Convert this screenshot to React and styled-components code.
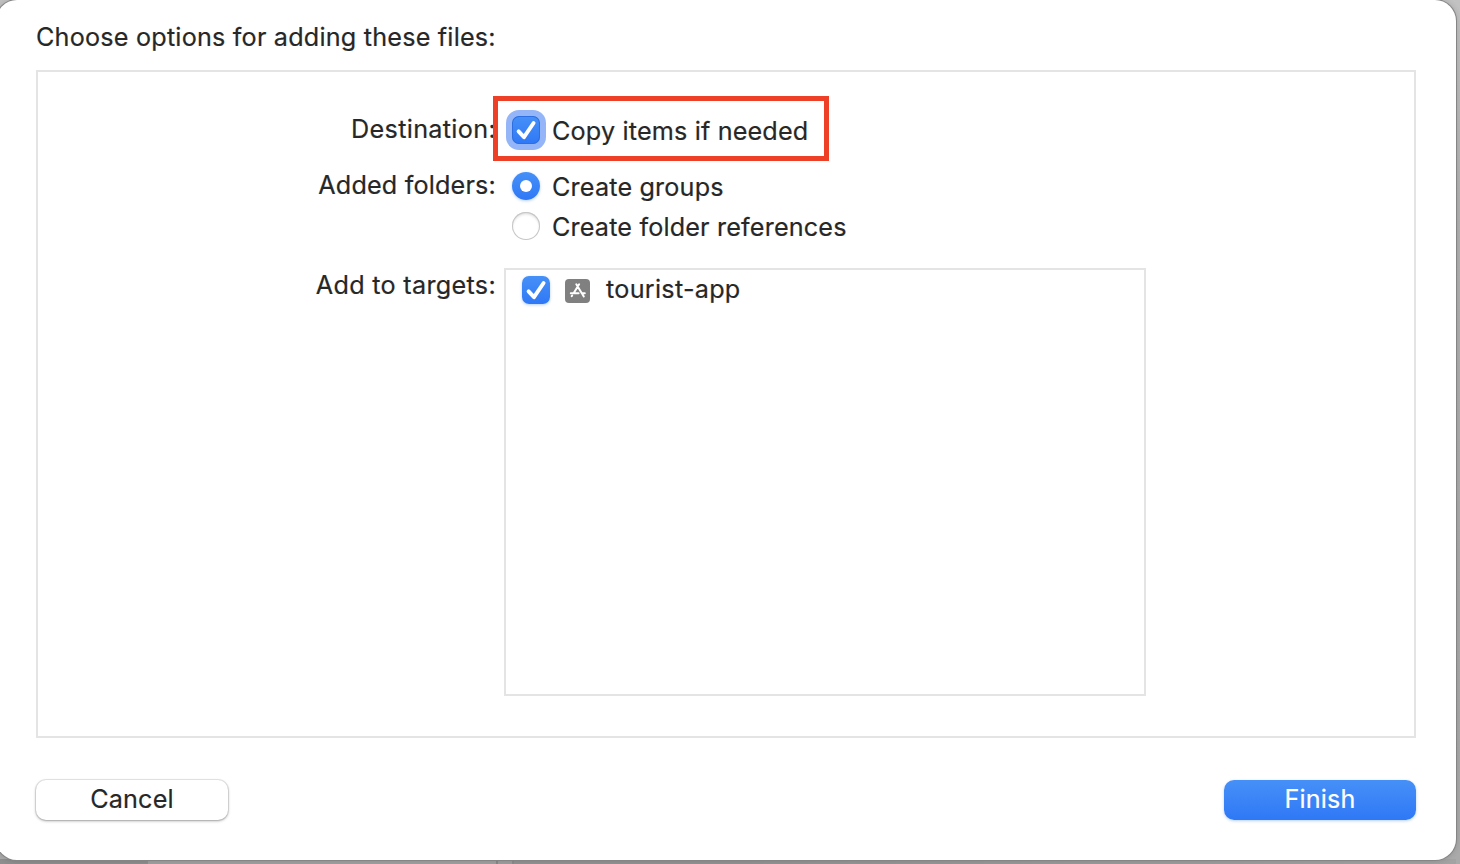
import React from 'react';
import styled, { createGlobalStyle, css } from 'styled-components';

const GlobalStyle = createGlobalStyle`
  * { box-sizing: border-box; }
  body { margin: 0; overflow: hidden; }
`;

const Backdrop = styled.div`
  width: 1460px;
  height: 864px;
  padding: 0 4px 4px 0;
  overflow: hidden;
  background:
    linear-gradient(90deg, #8e8e8e 148px, #a0a0a0 148px 496px, #888 496px 498px, #9e9e9e 498px 512px, #8c8c8c 512px 514px, #939393 514px 740px, #a3a3a3 1456px, transparent 1456px) 0 100% / 100% 5px no-repeat,
    linear-gradient(#c2c2c2, #b2b2b2 200px, #a9a9a9 600px, #aaa);
`;

const Sheet = styled.main`
  display: flex;
  flex-direction: column;
  width: 1460px;
  height: 860px;
  margin-left: -4px;
  padding: 18px 40px 0;
  border-radius: 21px;
  background: #fff;
  box-shadow: 0 0 0 1px #858585, 0 0 6px rgba(0, 0, 0, 0.2);
  color: #272727;
  font: 400 25.2px/38px Inter, "Liberation Sans", sans-serif;
  -webkit-text-stroke: 0.2px currentColor;
`;

const Text = styled.span`
  white-space: nowrap;
  letter-spacing: ${({ $track = 0 }) => $track}px;
`;

const Title = styled.h1`
  height: 52px;
  margin: 0;
  font: inherit;
`;

const Panel = styled.section`
  height: 668px;
  padding-top: 38px;
  border: 2px solid #e4e4e4;
`;

const FormRow = styled.div`
  display: grid;
  grid-template-columns: 458px auto;
  column-gap: ${({ $gap = 16 }) => $gap}px;
  justify-content: start;
  margin-bottom: ${({ $after = 16 }) => $after}px;
`;

const Label = styled.div`
  padding-top: ${({ $top = 3 }) => $top}px;
  line-height: 32px;
  text-align: right;
`;

const Choice = styled.label`
  position: relative;
  display: flex;
  align-items: center;
  gap: 12px;
  height: 40px;
  line-height: 40px;

  ${Text} { padding-top: 2px; }
`;

const blueFill = css`
  background: linear-gradient(#4690f8, #2f78f6);
  box-shadow: 0 1px 3px rgba(47, 120, 246, 0.35);
`;

const CheckSquare = styled.span`
  flex: none;
  width: 28px;
  height: 28px;
  border-radius: 7px;
  ${blueFill}
  ${({ $focused }) => $focused && css`
    box-shadow: inset 0 0 0 1px #2d6ee0, 0 0 0 6px #94b6f8;
  `}
  svg { display: block; }
`;

const Radio = styled.span`
  display: grid;
  place-items: center;
  flex: none;
  width: 28px;
  height: 28px;
  border-radius: 50%;
  ${({ $on }) => $on ? blueFill : css`
    background: #fff;
    box-shadow: inset 0 0 0 1px #c6c6c6, inset 0 2px 3px rgba(0, 0, 0, 0.16);
  `}
  &::after {
    content: "";
    width: 12px;
    height: 12px;
    border-radius: 50%;
    background: #fff;
    opacity: ${({ $on }) => ($on ? 1 : 0)};
  }
`;

const Highlight = styled.span`
  position: absolute;
  top: -14px;
  left: -19px;
  width: 336px;
  height: 65px;
  border: 5px solid #ee4027;
`;

const TargetList = styled.div`
  width: 642px;
  height: 428px;
  border: 2px solid #e4e4e4;
`;

const TargetRow = styled.div`
  display: flex;
  align-items: center;
  height: 40px;
  padding-left: 16px;
  line-height: 38px;

  ${Text} { padding-bottom: 2px; }
`;

const AppIcon = styled.svg`
  margin: 2px 16px 0 15px;
`;

const Footer = styled.footer`
  display: flex;
  justify-content: space-between;
  margin-top: 42px;
`;

const Button = styled.button`
  width: 192px;
  height: 40px;
  padding: 0 0 2px;
  border: 0;
  border-radius: 10px;
  font: inherit;
  line-height: 38px;
  ${({ $primary }) => $primary ? css`
    color: #fff;
    ${blueFill}
  ` : css`
    color: #272727;
    background: #fff;
    box-shadow: 0 0 0 1px rgba(0, 0, 0, 0.08), 0 1px 3px rgba(0, 0, 0, 0.34);
  `}
`;

function Check({ focused }) {
  return (
    <CheckSquare $focused={focused}>
      <svg width="28" height="28" viewBox="0 0 28 28" fill="none">
        <path d="M6.6 15.4 12 21.2 21.6 7" stroke="#fff" strokeWidth="3.9" strokeLinecap="round" strokeLinejoin="round" />
      </svg>
    </CheckSquare>
  );
}

function TargetIcon() {
  return (
    <AppIcon width="25" height="24" viewBox="0 0 25 24" fill="none">
      <rect width="25" height="24" rx="4" fill="#808080" />
      <g stroke="#fff" strokeWidth="2" strokeLinecap="round">
        <path d="M11.3 5.3 18.8 17.5M14.1 5.3 8.6 14.2M5.8 14.2H13.6M16.8 14.2H19.8M6.7 17.2 7.2 16.5" />
      </g>
    </AppIcon>
  );
}

export default function App() {
  return (
    <>
      <GlobalStyle />
      <Backdrop>
        <Sheet>
          <Title><Text $track={0.2}>Choose options for adding these files:</Text></Title>
          <Panel>
            <FormRow>
              <Label><Text $track={0.32}>Destination:</Text></Label>
              <Choice>
                <Check focused />
                <Text $track={0.16}>Copy items if needed</Text>
                <Highlight />
              </Choice>
            </FormRow>
            <FormRow $after={22}>
              <Label><Text $track={0.17}>Added folders:</Text></Label>
              <div>
                <Choice><Radio $on /><Text $track={0.17}>Create groups</Text></Choice>
                <Choice><Radio /><Text $track={0.16}>Create folder references</Text></Choice>
              </div>
            </FormRow>
            <FormRow $gap={8} $after={0}>
              <Label $top={1}><Text $track={0.3}>Add to targets:</Text></Label>
              <TargetList>
                <TargetRow>
                  <Check />
                  <TargetIcon />
                  <Text $track={0.27}>tourist-app</Text>
                </TargetRow>
              </TargetList>
            </FormRow>
          </Panel>
          <Footer>
            <Button><Text $track={0.15}>Cancel</Text></Button>
            <Button $primary><Text $track={0.15}>Finish</Text></Button>
          </Footer>
        </Sheet>
      </Backdrop>
    </>
  );
}
